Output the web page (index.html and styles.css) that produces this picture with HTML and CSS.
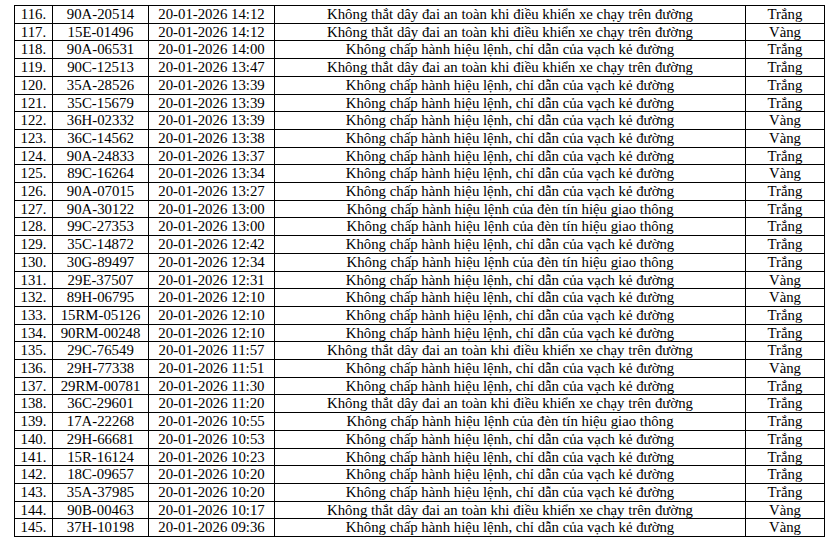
FILE: index.html
```html
<!DOCTYPE html>
<html lang="vi">
<head>
<meta charset="utf-8">
<link rel="stylesheet" href="styles.css">
</head>
<body>
<table class="list">
<colgroup><col class="c1"><col class="c2"><col class="c3"><col class="c4"><col class="c5"></colgroup>
<tbody>
<tr><td>116.</td><td>90A-20514</td><td>20-01-2026 14:12</td><td>Không thắt dây đai an toàn khi điều khiển xe chạy trên đường</td><td>Trắng</td></tr>
<tr><td>117.</td><td>15E-01496</td><td>20-01-2026 14:12</td><td>Không thắt dây đai an toàn khi điều khiển xe chạy trên đường</td><td>Vàng</td></tr>
<tr><td>118.</td><td>90A-06531</td><td>20-01-2026 14:00</td><td>Không chấp hành hiệu lệnh, chỉ dẫn của vạch kẻ đường</td><td>Trắng</td></tr>
<tr><td>119.</td><td>90C-12513</td><td>20-01-2026 13:47</td><td>Không thắt dây đai an toàn khi điều khiển xe chạy trên đường</td><td>Trắng</td></tr>
<tr><td>120.</td><td>35A-28526</td><td>20-01-2026 13:39</td><td>Không chấp hành hiệu lệnh, chỉ dẫn của vạch kẻ đường</td><td>Trắng</td></tr>
<tr><td>121.</td><td>35C-15679</td><td>20-01-2026 13:39</td><td>Không chấp hành hiệu lệnh, chỉ dẫn của vạch kẻ đường</td><td>Trắng</td></tr>
<tr><td>122.</td><td>36H-02332</td><td>20-01-2026 13:39</td><td>Không chấp hành hiệu lệnh, chỉ dẫn của vạch kẻ đường</td><td>Vàng</td></tr>
<tr><td>123.</td><td>36C-14562</td><td>20-01-2026 13:38</td><td>Không chấp hành hiệu lệnh, chỉ dẫn của vạch kẻ đường</td><td>Vàng</td></tr>
<tr><td>124.</td><td>90A-24833</td><td>20-01-2026 13:37</td><td>Không chấp hành hiệu lệnh, chỉ dẫn của vạch kẻ đường</td><td>Trắng</td></tr>
<tr><td>125.</td><td>89C-16264</td><td>20-01-2026 13:34</td><td>Không chấp hành hiệu lệnh, chỉ dẫn của vạch kẻ đường</td><td>Vàng</td></tr>
<tr><td>126.</td><td>90A-07015</td><td>20-01-2026 13:27</td><td>Không chấp hành hiệu lệnh, chỉ dẫn của vạch kẻ đường</td><td>Trắng</td></tr>
<tr><td>127.</td><td>90A-30122</td><td>20-01-2026 13:00</td><td>Không chấp hành hiệu lệnh của đèn tín hiệu giao thông</td><td>Trắng</td></tr>
<tr><td>128.</td><td>99C-27353</td><td>20-01-2026 13:00</td><td>Không chấp hành hiệu lệnh của đèn tín hiệu giao thông</td><td>Trắng</td></tr>
<tr><td>129.</td><td>35C-14872</td><td>20-01-2026 12:42</td><td>Không chấp hành hiệu lệnh, chỉ dẫn của vạch kẻ đường</td><td>Trắng</td></tr>
<tr><td>130.</td><td>30G-89497</td><td>20-01-2026 12:34</td><td>Không chấp hành hiệu lệnh của đèn tín hiệu giao thông</td><td>Trắng</td></tr>
<tr><td>131.</td><td>29E-37507</td><td>20-01-2026 12:31</td><td>Không chấp hành hiệu lệnh, chỉ dẫn của vạch kẻ đường</td><td>Vàng</td></tr>
<tr><td>132.</td><td>89H-06795</td><td>20-01-2026 12:10</td><td>Không chấp hành hiệu lệnh, chỉ dẫn của vạch kẻ đường</td><td>Vàng</td></tr>
<tr><td>133.</td><td>15RM-05126</td><td>20-01-2026 12:10</td><td>Không chấp hành hiệu lệnh, chỉ dẫn của vạch kẻ đường</td><td>Trắng</td></tr>
<tr><td>134.</td><td>90RM-00248</td><td>20-01-2026 12:10</td><td>Không chấp hành hiệu lệnh, chỉ dẫn của vạch kẻ đường</td><td>Trắng</td></tr>
<tr><td>135.</td><td>29C-76549</td><td>20-01-2026 11:57</td><td>Không thắt dây đai an toàn khi điều khiển xe chạy trên đường</td><td>Trắng</td></tr>
<tr><td>136.</td><td>29H-77338</td><td>20-01-2026 11:51</td><td>Không chấp hành hiệu lệnh, chỉ dẫn của vạch kẻ đường</td><td>Vàng</td></tr>
<tr><td>137.</td><td>29RM-00781</td><td>20-01-2026 11:30</td><td>Không chấp hành hiệu lệnh, chỉ dẫn của vạch kẻ đường</td><td>Trắng</td></tr>
<tr><td>138.</td><td>36C-29601</td><td>20-01-2026 11:20</td><td>Không thắt dây đai an toàn khi điều khiển xe chạy trên đường</td><td>Trắng</td></tr>
<tr><td>139.</td><td>17A-22268</td><td>20-01-2026 10:55</td><td>Không chấp hành hiệu lệnh của đèn tín hiệu giao thông</td><td>Trắng</td></tr>
<tr><td>140.</td><td>29H-66681</td><td>20-01-2026 10:53</td><td>Không chấp hành hiệu lệnh, chỉ dẫn của vạch kẻ đường</td><td>Trắng</td></tr>
<tr><td>141.</td><td>15R-16124</td><td>20-01-2026 10:23</td><td>Không chấp hành hiệu lệnh, chỉ dẫn của vạch kẻ đường</td><td>Trắng</td></tr>
<tr><td>142.</td><td>18C-09657</td><td>20-01-2026 10:20</td><td>Không chấp hành hiệu lệnh, chỉ dẫn của vạch kẻ đường</td><td>Trắng</td></tr>
<tr><td>143.</td><td>35A-37985</td><td>20-01-2026 10:20</td><td>Không chấp hành hiệu lệnh, chỉ dẫn của vạch kẻ đường</td><td>Trắng</td></tr>
<tr><td>144.</td><td>90B-00463</td><td>20-01-2026 10:17</td><td>Không thắt dây đai an toàn khi điều khiển xe chạy trên đường</td><td>Vàng</td></tr>
<tr><td>145.</td><td>37H-10198</td><td>20-01-2026 09:36</td><td>Không chấp hành hiệu lệnh, chỉ dẫn của vạch kẻ đường</td><td>Vàng</td></tr>
</tbody>
</table>
</body>
</html>
```
FILE: styles.css
```css
html, body {
  margin: 0;
  padding: 0;
  background: #fff;
}
body {
  padding: 5px 0 0 14px;
  font-family: "Liberation Serif", "Times New Roman", serif;
  font-size: 14.8px;
  color: #000;
}
.list {
  border-collapse: collapse;
  table-layout: fixed;
  width: 810px;
}
.c1 { width: 38px; }
.c2 { width: 96px; }
.c3 { width: 126px; }
.c4 { width: 471px; }
.c5 { width: 79px; }
.list td {
  border: 1px solid #000;
  padding: 1px 0 0 0;
  height: 15.7px;
  line-height: 15.7px;
  text-align: center;
  white-space: nowrap;
  overflow: hidden;
}
```
